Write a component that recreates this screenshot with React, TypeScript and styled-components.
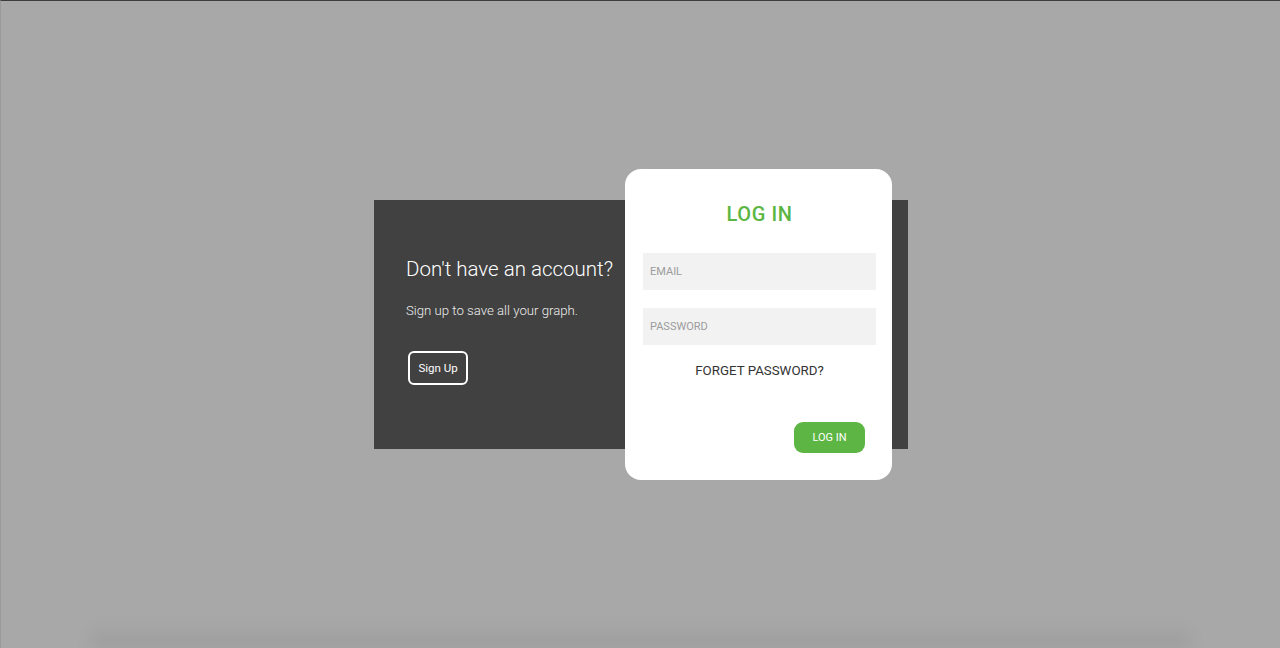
import React from "react";
import styled, { createGlobalStyle } from "styled-components";

const GlobalStyle = createGlobalStyle`
  html, body {
    margin: 0;
    padding: 0;
    height: 100%;
    overflow: hidden;
  }
  body {
    background: #a8a8a8;
    font-family: Roboto, "Liberation Sans", sans-serif;
  }
`;

const Page = styled.div`
  height: 648px;
  box-sizing: border-box;
  border-top: 1px solid #3c3c3c;
  border-left: 1px solid #9a9a9a;
  display: flex;
  flex-direction: column;
`;

const Stage = styled.main`
  flex: 1;
  display: flex;
  align-items: center;
  justify-content: center;
  padding: 22px 0 0 1px;
`;

const Shade = styled.div`
  height: 22px;
  margin: 0 90px;
  background: linear-gradient(to bottom, rgba(0, 0, 0, 0), rgba(0, 0, 0, 0.09));
  filter: blur(8px);
`;

const Panel = styled.section`
  display: flex;
  width: 534px;
  height: 249px;
  background: #414141;
`;

const Intro = styled.div`
  width: 251px;
  box-sizing: border-box;
  padding: 57px 0 0 32px;
  color: #fff;
`;

const IntroTitle = styled.h2`
  margin: 0;
  font-size: 20.5px;
  line-height: 24px;
  font-weight: 300;
  white-space: nowrap;
`;

const IntroText = styled.p`
  margin: 20px 0 0;
  font-size: 13.2px;
  line-height: 20px;
  font-weight: 300;
  color: #ededed;
  white-space: nowrap;
`;

const OutlineButton = styled.button`
  margin: 30px 0 0 2px;
  width: 60px;
  height: 34px;
  border: 2px solid #fff;
  border-radius: 6px;
  background: transparent;
  color: #fff;
  font-family: Roboto, "Liberation Sans", sans-serif;
  font-size: 11.5px;
  padding: 0;
`;

const Card = styled.div`
  width: 267px;
  margin: -31px 0;
  background: #fff;
  border-radius: 16px;
  box-sizing: border-box;
  padding: 33px 16px 0 18px;
  display: flex;
  flex-direction: column;
`;

const CardTitle = styled.h1`
  margin: 0 0 27px;
  text-align: center;
  color: #5bb543;
  font-size: 20px;
  line-height: 24px;
  font-weight: 500;
  letter-spacing: 0.6px;
`;

const Field = styled.input`
  width: 233px;
  height: 37px;
  box-sizing: border-box;
  border: none;
  outline: none;
  background: #f2f2f2;
  padding: 0 7px;
  margin-bottom: 18px;
  font-family: Roboto, "Liberation Sans", sans-serif;
  font-size: 11px;
  color: #333;

  &::placeholder {
    color: #9c9c9c;
  }
`;

const ForgotLink = styled.a`
  margin-top: -2px;
  text-align: center;
  font-size: 13.3px;
  line-height: 20px;
  color: #333;
  text-decoration: none;
`;

const Actions = styled.div`
  display: flex;
  justify-content: flex-end;
  margin-top: 41px;
  padding-right: 11px;
`;

const PrimaryButton = styled.button`
  width: 71px;
  height: 31px;
  border: none;
  border-radius: 9px;
  background: #5db544;
  color: #fff;
  font-family: Roboto, "Liberation Sans", sans-serif;
  font-size: 11px;
  padding: 0;
`;

export default function App() {
  return (
    <>
      <GlobalStyle />
      <Page>
        <Stage>
          <Panel>
            <Intro>
              <IntroTitle>Don't have an account?</IntroTitle>
              <IntroText>Sign up to save all your graph.</IntroText>
              <OutlineButton>Sign Up</OutlineButton>
            </Intro>
            <Card>
              <CardTitle>LOG IN</CardTitle>
              <Field placeholder="EMAIL" />
              <Field type="password" placeholder="PASSWORD" />
              <ForgotLink>FORGET PASSWORD?</ForgotLink>
              <Actions>
                <PrimaryButton>LOG IN</PrimaryButton>
              </Actions>
            </Card>
          </Panel>
        </Stage>
        <Shade />
      </Page>
    </>
  );
}
